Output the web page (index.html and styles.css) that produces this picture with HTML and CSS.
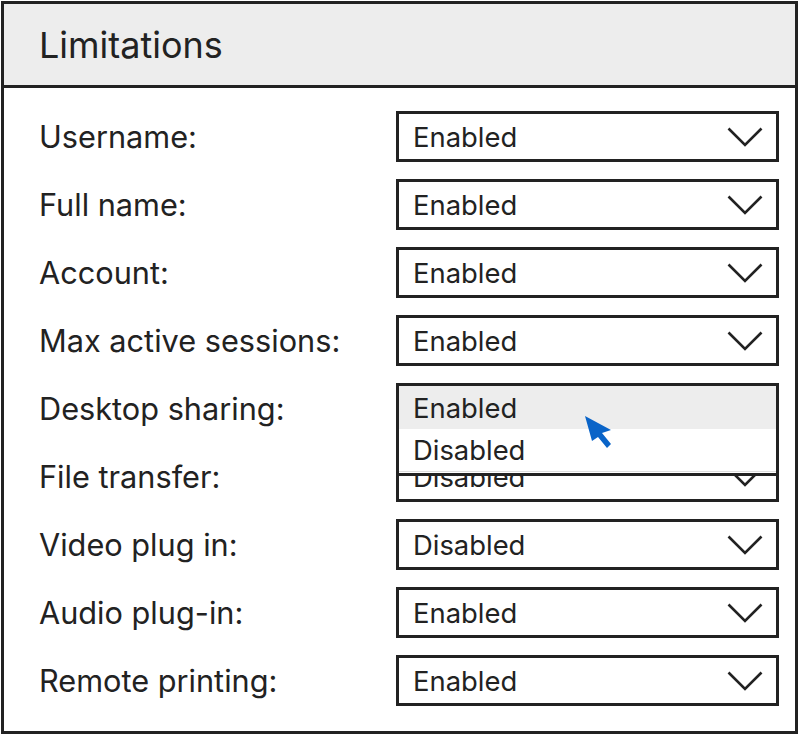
FILE: index.html
```html
<!DOCTYPE html>
<html>
<head>
<meta charset="utf-8">
<link rel="stylesheet" href="styles.css">
</head>
<body>
<div class="panel">
  <div class="header">Limitations</div>
  <div class="rows">
    <div class="row"><div class="label">Username:</div><div class="select"><span>Enabled</span><svg class="chev" viewBox="0 0 36 20"><polyline points="1.5,1.5 18,18 34.5,1.5"/></svg></div></div>
    <div class="row"><div class="label">Full name:</div><div class="select"><span>Enabled</span><svg class="chev" viewBox="0 0 36 20"><polyline points="1.5,1.5 18,18 34.5,1.5"/></svg></div></div>
    <div class="row"><div class="label">Account:</div><div class="select"><span>Enabled</span><svg class="chev" viewBox="0 0 36 20"><polyline points="1.5,1.5 18,18 34.5,1.5"/></svg></div></div>
    <div class="row"><div class="label">Max active sessions:</div><div class="select"><span>Enabled</span><svg class="chev" viewBox="0 0 36 20"><polyline points="1.5,1.5 18,18 34.5,1.5"/></svg></div></div>
    <div class="row"><div class="label">Desktop sharing:</div>
      <div class="select open"><span>Enabled</span><svg class="chev" viewBox="0 0 36 20"><polyline points="1.5,1.5 18,18 34.5,1.5"/></svg>
        <div class="menu">
          <div class="option active">Enabled</div>
          <div class="option">Disabled</div>
        </div>
        <svg class="cursor" viewBox="0 0 30 36"><polygon points="2,2 28,16 19,19 28,30 24,34 15,23 9,27"/></svg>
      </div>
    </div>
    <div class="row"><div class="label">File transfer:</div><div class="select"><span>Disabled</span><svg class="chev" viewBox="0 0 36 20"><polyline points="1.5,1.5 18,18 34.5,1.5"/></svg></div></div>
    <div class="row"><div class="label">Video plug in:</div><div class="select"><span>Disabled</span><svg class="chev" viewBox="0 0 36 20"><polyline points="1.5,1.5 18,18 34.5,1.5"/></svg></div></div>
    <div class="row"><div class="label">Audio plug-in:</div><div class="select"><span>Enabled</span><svg class="chev" viewBox="0 0 36 20"><polyline points="1.5,1.5 18,18 34.5,1.5"/></svg></div></div>
    <div class="row"><div class="label">Remote printing:</div><div class="select"><span>Enabled</span><svg class="chev" viewBox="0 0 36 20"><polyline points="1.5,1.5 18,18 34.5,1.5"/></svg></div></div>
  </div>
</div>
</body>
</html>
```
FILE: styles.css
```css
html, body {
  margin: 0;
  padding: 0;
  background: #fff;
}
body {
  font-family: Inter, "Noto Sans", sans-serif;
  color: #222;
}
.panel {
  margin: 1px;
  width: 797px;
  height: 733px;
  box-sizing: border-box;
  border: 3px solid #222;
  display: flex;
  flex-direction: column;
}
.header {
  height: 81px;
  background: #ededed;
  border-bottom: 3px solid #222;
  display: flex;
  align-items: center;
  padding-left: 35px;
  font-size: 36px;
}
.rows {
  padding: 23px 16px 0 35px;
  display: flex;
  flex-direction: column;
  gap: 17px;
}
.row {
  display: flex;
  align-items: center;
  justify-content: space-between;
  height: 51px;
}
.label {
  font-size: 30.7px;
}
.select {
  position: relative;
  width: 383px;
  height: 51px;
  box-sizing: border-box;
  border: 3px solid #222;
  background: #fff;
  display: flex;
  align-items: center;
  justify-content: space-between;
  padding: 0 13px 0 14px;
  font-size: 27.4px;
}
.chev {
  width: 36px;
  height: 20px;
  fill: none;
  stroke: #222;
  stroke-width: 2.6;
}
.menu {
  position: absolute;
  left: -3px;
  top: -3px;
  width: 383px;
  height: 93px;
  box-sizing: border-box;
  border: 3px solid #222;
  background: #fff;
  z-index: 2;
  display: flex;
  flex-direction: column;
}
.option {
  height: 43px;
  display: flex;
  align-items: center;
  padding-left: 14px;
}
.option + .option {
  height: 42px;
  border-bottom: 1px solid #ddd;
}
.option.active {
  background: #ededed;
}
.cursor {
  position: absolute;
  left: 184px;
  top: 28px;
  width: 30px;
  height: 36px;
  fill: #0a64c8;
  z-index: 3;
}
```
